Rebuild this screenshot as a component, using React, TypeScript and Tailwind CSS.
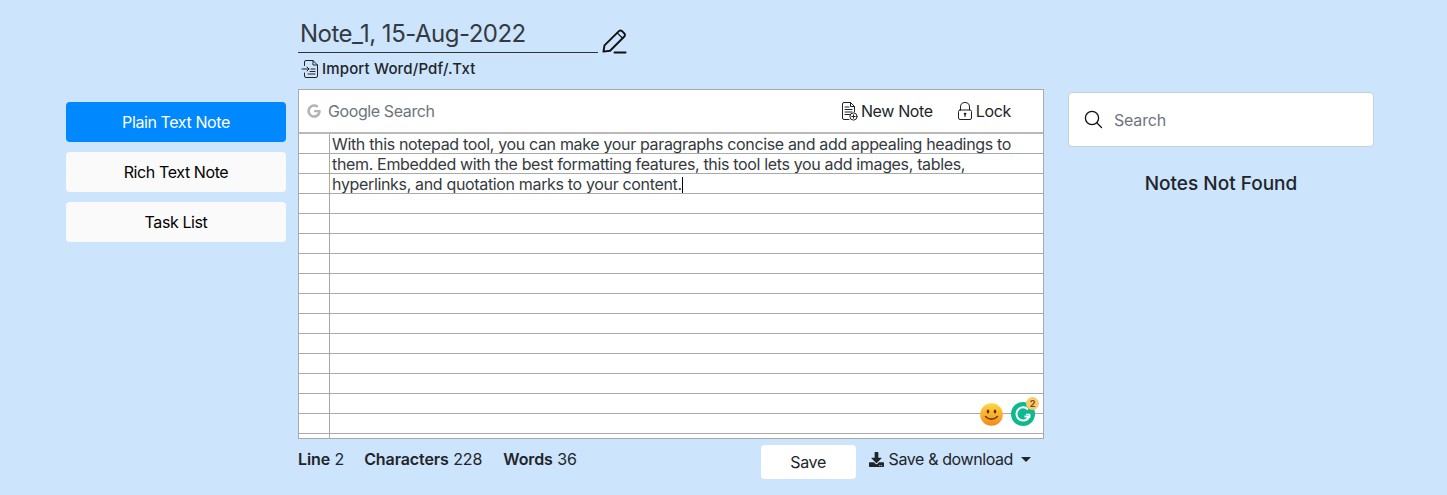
import React from "react";
import { FaGoogle, FaDownload } from "react-icons/fa";

const font = "[font-family:Inter,'Liberation_Sans',sans-serif]";

function PencilIcon() {
  return (
    <svg width="25" height="25" viewBox="0 0 26 26" fill="none" stroke="#111" strokeWidth="2" strokeLinejoin="round" strokeLinecap="round">
      <path d="M1.5 23.5 L2.6 17 L17.6 2.2 Q19 1 20.6 2 L23.4 4.8 Q24.4 6.4 23.2 7.8 L8.4 22.6 Z" />
      <path d="M15.8 4 L21.4 9.6" strokeWidth="1.2" />
      <path d="M13 24.4 L24.5 24.4" />
    </svg>
  );
}

function ImportIcon() {
  return (
    <svg width="18" height="20" viewBox="0 0 18 20" fill="none" stroke="#222" strokeWidth="1" strokeLinecap="round" strokeLinejoin="round">
      <path d="M3.5 6.5 V3 Q3.5 1.5 5 1.5 H12 L16.5 6 V17 Q16.5 18.5 15 18.5 H5 Q3.5 18.5 3.5 17 V14" />
      <path d="M12 1.5 V6 H16.5" />
      <path d="M1 10 H8 M6 8 L8 10 L6 12" />
      <path d="M10 10 H14 M9 12.5 H14 M7 15 H14" />
    </svg>
  );
}

function NewNoteIcon() {
  return (
    <svg width="17" height="20" viewBox="0 0 17 20" fill="none" stroke="#222" strokeWidth="1" strokeLinecap="round" strokeLinejoin="round">
      <path d="M8 18.5 H3 Q1.5 18.5 1.5 17 V3 Q1.5 1.5 3 1.5 H9.5 L13.5 5.5 V11" />
      <path d="M9.5 1.5 V5.5 H13.5" />
      <path d="M4 6 H8 M4 8.5 H11 M4 11 H11 M4 13.5 H9" />
      <circle cx="12.5" cy="15.5" r="3.6" />
      <path d="M12.5 13.8 V17.2 M10.8 15.5 H14.2" />
    </svg>
  );
}

function LockIcon() {
  return (
    <svg width="16" height="20" viewBox="0 0 16 20" fill="none" stroke="#222" strokeWidth="1" strokeLinecap="round">
      <path d="M3.5 9 V6 Q3.5 1.5 8 1.5 Q12.5 1.5 12.5 6 V9" />
      <rect x="1.5" y="9" width="13" height="9.5" rx="1.5" />
      <path d="M8 13 V15.5" strokeWidth="1.2" />
      <circle cx="8" cy="12.8" r="0.8" fill="#222" />
    </svg>
  );
}

function SearchIcon() {
  return (
    <svg width="19" height="19" viewBox="0 0 19 19" fill="none" stroke="#111" strokeWidth="1.3" strokeLinecap="round">
      <circle cx="8" cy="8" r="6.6" />
      <path d="M13 13 L17.5 17.5" />
    </svg>
  );
}

function Smiley() {
  return (
    <svg width="23" height="23" viewBox="0 0 23 23">
      <defs>
        <linearGradient id="sm" x1="0" y1="0" x2="0" y2="1">
          <stop offset="0" stopColor="#ffd83d" />
          <stop offset="1" stopColor="#f7871c" />
        </linearGradient>
      </defs>
      <circle cx="11.5" cy="11.5" r="11.3" fill="url(#sm)" />
      <ellipse cx="8" cy="8.5" rx="1.3" ry="2" fill="#5a3410" />
      <ellipse cx="15" cy="8.5" rx="1.3" ry="2" fill="#5a3410" />
      <path d="M5.5 13.5 Q11.5 19 17.5 13.5" fill="none" stroke="#5a3410" strokeWidth="1.3" strokeLinecap="round" />
    </svg>
  );
}

function Grammarly() {
  return (
    <div className="relative h-[26px] w-[26px]">
      <svg width="24" height="24" viewBox="0 0 24 24" className="absolute bottom-0 left-0">
        <circle cx="12" cy="12" r="12" fill="#0fb98f" />
        <path d="M17 7.5 A6.6 6.6 0 1 0 18.2 14.5 H13.5" fill="none" stroke="#fff" strokeWidth="2" />
        <path d="M15 12.4 L18.6 12.4 L18.6 16" fill="none" stroke="#fff" strokeWidth="1.4" />
      </svg>
      <span className="absolute right-[-2px] top-[-3px] flex h-[13px] w-[13px] items-center justify-center rounded-full bg-[#fbc96e] text-[9px] font-bold leading-none text-[#7a4a10]">
        2
      </span>
    </div>
  );
}

function SideButton({ label, active }: { label: string; active?: boolean }) {
  return (
    <button
      className={
        active
          ? "h-10 w-full rounded bg-[#0088ff] text-center text-base tracking-[-0.4px] text-white"
          : "h-10 w-full rounded bg-[#fafafa] text-center text-base tracking-[-0.4px] text-black"
      }
    >
      {label}
    </button>
  );
}

export default function App() {
  return (
    <div className={`${font} flex h-[495px] w-[1447px] items-start overflow-hidden bg-[#cce4fc] text-[#212529]`}>
      <aside className="ml-[66px] mt-[102px] flex w-[220px] shrink-0 flex-col gap-[10px]">
        <SideButton label="Plain Text Note" active />
        <SideButton label="Rich Text Note" />
        <SideButton label="Task List" />
      </aside>

      <main className="ml-3 mt-[16px] w-[746px] shrink-0">
        <div className="flex items-end">
          <div className="h-[37px] w-[300px] border-b border-[#333] pl-[2px] text-2xl leading-[35px] tracking-[-0.5px] text-[#343a40]">
            Note_1, 15-Aug-2022
          </div>
          <div className="mb-[-1px] ml-[4px]">
            <PencilIcon />
          </div>
        </div>
        <div className="mt-[6px] flex h-5 items-center pl-[3px] text-[15px] font-medium tracking-[0.15px] text-[#212529]">
          <ImportIcon />
          <span className="ml-[3px]">Import Word/Pdf/.Txt</span>
        </div>

        <div className="mt-[10px] border border-[#aaaaaa] bg-white">
          <div className="flex h-[44px] items-center border-b-2 border-[#b9b9b9] pl-2">
            <FaGoogle className="text-[14px] text-[#b5b5b5]" />
            <span className="ml-[7px] text-base tracking-[-0.4px] text-[#6c757d]">Google Search</span>
            <div className="ml-auto flex items-center pr-[32px] text-base tracking-[-0.35px] text-[#212529]">
              <NewNoteIcon />
              <span className="ml-[3px]">New Note</span>
              <span className="ml-[24px]"><LockIcon /></span>
              <span className="ml-[3px]">Lock</span>
            </div>
          </div>
          <div className="relative h-[304px] bg-[linear-gradient(to_right,transparent_30px,#aaaaaa_30px,#aaaaaa_31px,transparent_31px),repeating-linear-gradient(to_bottom,transparent_0,transparent_19px,#aaaaaa_19px,#aaaaaa_20px)]">
            <p className="pl-[33px] pr-[8px] text-base leading-5 tracking-[-0.34px] text-[#343a40]">
              With this notepad tool, you can make your paragraphs concise and add appealing headings to them. Embedded with the best formatting features, this tool lets you add images, tables, hyperlinks, and quotation marks to your content.
              <span className="inline-block h-[16px] w-px translate-y-[3px] bg-black" />
            </p>
            <div className="absolute bottom-[12px] right-[6px] flex items-end gap-[8px]">
              <Smiley />
              <Grammarly />
            </div>
          </div>
        </div>

        <div className="mt-[6px] flex h-[34px] items-center text-base tracking-[-0.1px] text-[#212529]">
          <div className="flex items-center pb-[6px]">
            <span><b className="font-semibold">Line</b> 2</span>
            <span className="ml-[20px]"><b className="font-semibold">Characters</b> 228</span>
            <span className="ml-[21px]"><b className="font-semibold">Words</b> 36</span>
          </div>
          <button className="ml-auto h-[34px] w-[95px] rounded bg-white text-base tracking-[-0.3px]">Save</button>
          <div className="ml-[13px] mr-[13px] flex items-center pb-[6px] tracking-[-0.4px]">
            <FaDownload className="text-[15px] text-[#212529]" />
            <span className="ml-[5px]">Save &amp; download</span>
            <span className="ml-[8px] h-0 w-0 border-x-[5px] border-t-[5px] border-x-transparent border-t-[#212529]" />
          </div>
        </div>
      </main>

      <section className="ml-[24px] mt-[92px] w-[306px] shrink-0">
        <div className="flex h-[55px] items-center rounded border border-[#c5d0dc] bg-white pl-[15px]">
          <SearchIcon />
          <span className="ml-[11px] text-base tracking-[-0.2px] text-[#6c757d]">Search</span>
        </div>
        <h2 className="mt-[25px] text-center text-[19px] font-medium leading-6">Notes Not Found</h2>
      </section>
    </div>
  );
}
